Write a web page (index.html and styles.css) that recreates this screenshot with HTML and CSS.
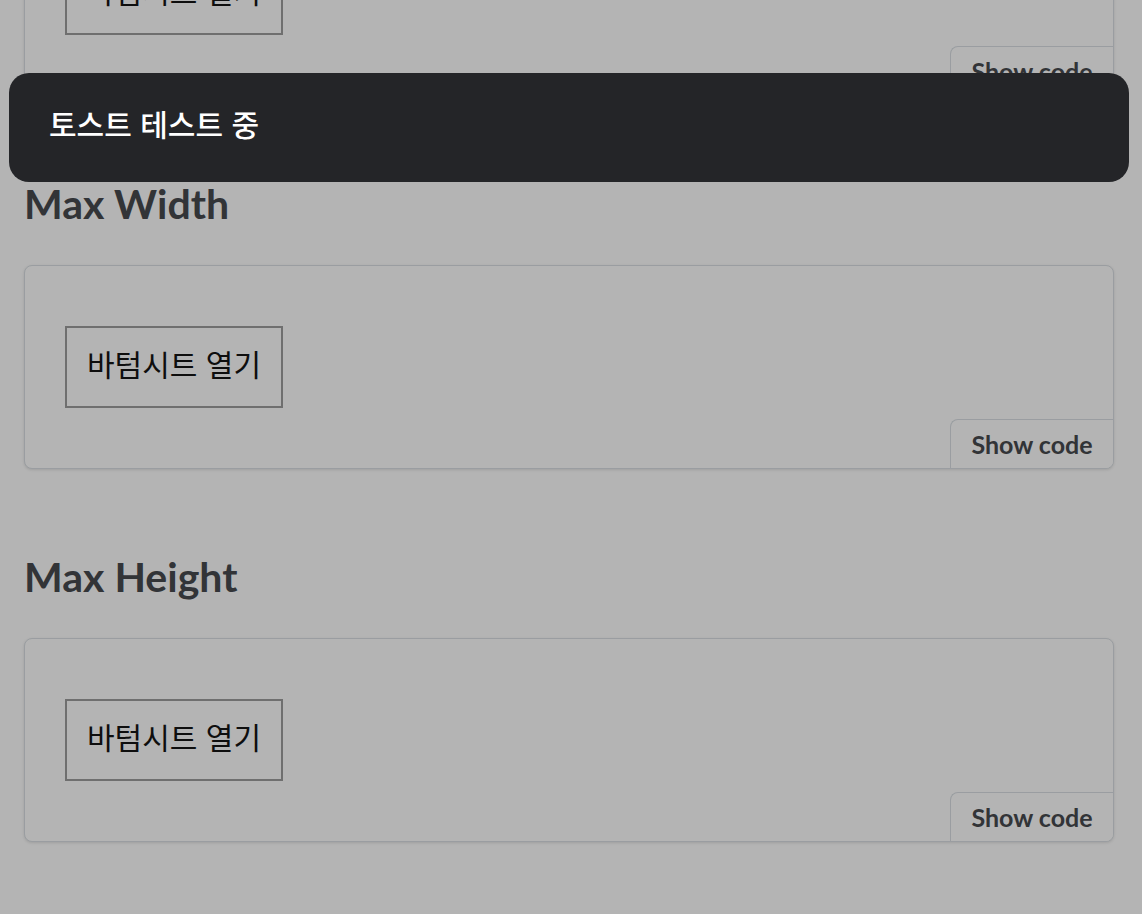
FILE: index.html
```html
<!DOCTYPE html>
<html lang="ko">
<head>
<meta charset="utf-8">
<title>BottomSheet</title>
<link rel="stylesheet" href="styles.css">
</head>
<body>
<main class="page">
  <section class="story">
    <h2 class="story-title">Default</h2>
    <div class="preview">
      <button class="open-btn" type="button">바텀시트 열기</button>
      <button class="show-code" type="button">Show code</button>
    </div>
  </section>
  <section class="story">
    <h2 class="story-title">Max Width</h2>
    <div class="preview">
      <button class="open-btn" type="button">바텀시트 열기</button>
      <button class="show-code" type="button">Show code</button>
    </div>
  </section>
  <section class="story">
    <h2 class="story-title">Max Height</h2>
    <div class="preview">
      <button class="open-btn" type="button">바텀시트 열기</button>
      <button class="show-code" type="button">Show code</button>
    </div>
  </section>
</main>
<div class="dim"></div>
<div class="toast" role="status">토스트 테스트 중</div>
</body>
</html>
```

FILE: styles.css
```css
html, body {
  margin: 0;
  padding: 0;
  background: #ffffff;
  overflow: hidden;
  height: 100%;
}

body {
  font-family: Lato, "Noto Sans", "Noto Sans CJK KR", sans-serif;
}

.page {
  margin-top: -193px;
  padding: 0 28px 0 24px;
}

.story-title {
  margin: 0 0 37px;
  font-size: 41px;
  line-height: 48px;
  font-weight: 700;
  color: #474a4f;
}

.preview {
  position: relative;
  margin-bottom: 84px;
  padding: 60px 40px;
  border: 1px solid #dadfe4;
  border-radius: 8px;
  box-shadow: 0 1px 3px rgba(0, 0, 0, 0.12);
  background: #ffffff;
  overflow: hidden;
}

.open-btn {
  display: block;
  margin: 0;
  padding: 15px 20px 23px;
  border: 2px solid #9d9d9d;
  border-radius: 0;
  background: transparent;
  font-family: "Noto Sans CJK KR", sans-serif;
  font-size: 30px;
  line-height: 40px;
  font-weight: 400;
  color: #141414;
}

.show-code {
  position: absolute;
  right: 0;
  bottom: 0;
  margin: 0;
  width: 163px;
  height: 49px;
  padding: 0;
  border: 0;
  border-top: 1px solid #dadfe4;
  border-left: 1px solid #dadfe4;
  border-radius: 8px 0 0 0;
  background: #ffffff;
  font-family: Lato, "Noto Sans", sans-serif;
  font-size: 25px;
  font-weight: 700;
  line-height: 48px;
  color: #474a4f;
  text-align: center;
}

.dim {
  position: fixed;
  inset: 0;
  background: rgba(0, 0, 0, 0.295);
}

.toast {
  position: fixed;
  top: 73px;
  left: 9px;
  right: 13px;
  height: 109px;
  box-sizing: border-box;
  padding: 0 40px 9px;
  display: flex;
  align-items: center;
  border-radius: 20px;
  background: #242528;
  color: #ffffff;
  font-family: "Noto Sans CJK KR", sans-serif;
  font-size: 30px;
  font-weight: 500;
  line-height: 40px;
}
```
